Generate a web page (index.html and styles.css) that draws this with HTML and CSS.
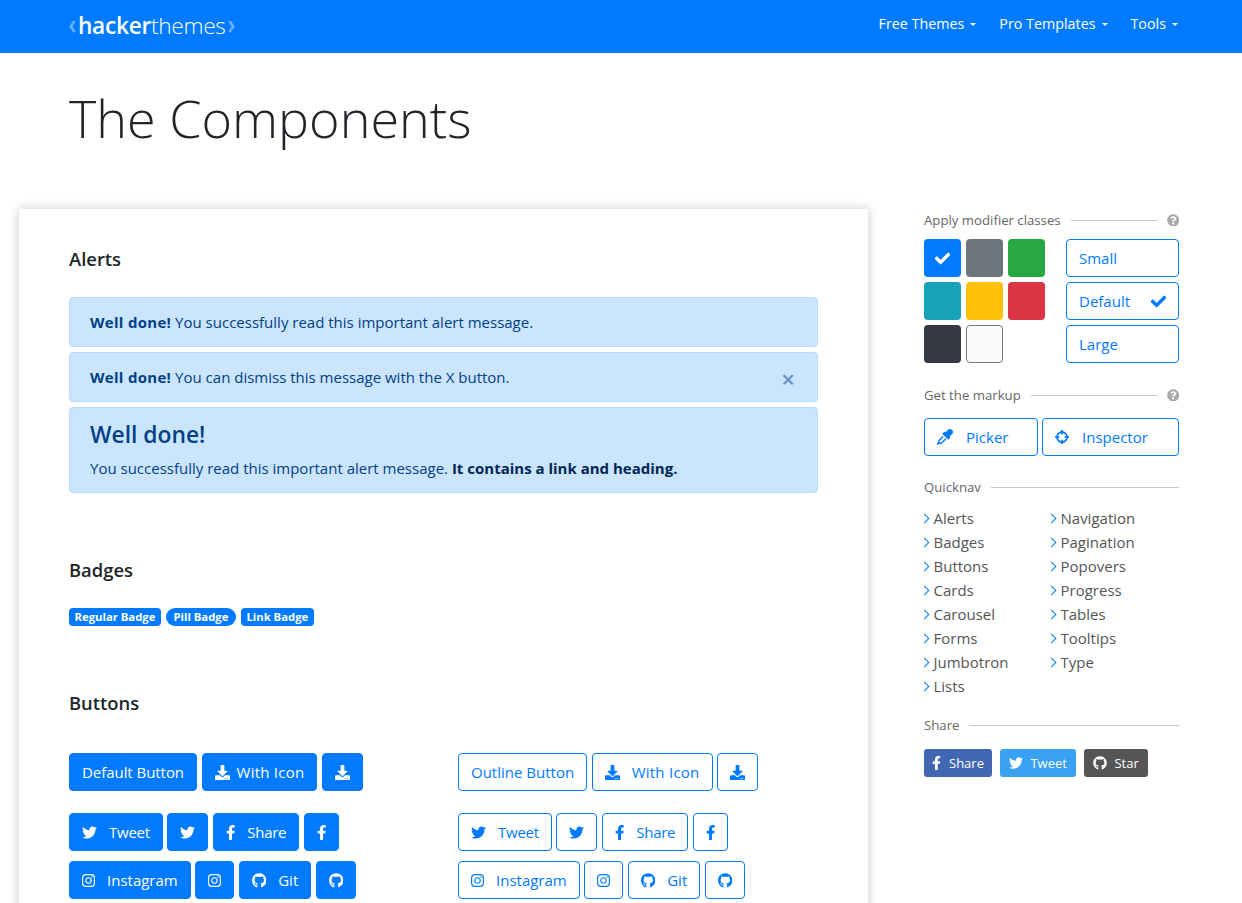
FILE: index.html
```html
<!DOCTYPE html>
<html lang="en">
<head>
  <meta charset="UTF-8" />
  <meta name="viewport" content="width=device-width, initial-scale=1.0" />
  <title>The Components - HackerThemes</title>
  <link rel="stylesheet" href="styles.css">
</head>
<body>

  <svg class="sprites" xmlns="http://www.w3.org/2000/svg">
    <symbol id="i-check" viewBox="0 0 512 512"><path d="M173.898 439.404l-166.4-166.4c-9.997-9.997-9.997-26.206 0-36.204l36.203-36.204c9.997-9.998 26.207-9.998 36.204 0L192 312.69 432.095 72.596c9.997-9.997 26.207-9.997 36.204 0l36.203 36.204c9.997 9.997 9.997 26.206 0 36.204l-294.4 294.401c-9.998 9.997-26.207 9.997-36.204-.001z"/></symbol>
    <symbol id="i-help" viewBox="0 0 512 512"><path d="M504 256c0 136.997-111.043 248-248 248S8 392.997 8 256C8 119.083 119.043 8 256 8s248 111.083 248 248zM262.655 90c-54.497 0-89.255 22.957-116.549 63.758-3.536 5.286-2.353 12.415 2.715 16.258l34.699 26.31c5.205 3.947 12.621 3.008 16.665-2.122 17.864-22.658 30.113-35.797 57.303-35.797 20.429 0 45.698 13.148 45.698 32.958 0 14.976-12.363 22.667-32.534 33.976C247.128 238.528 216 254.941 216 296v4c0 6.627 5.373 12 12 12h56c6.627 0 12-5.373 12-12v-1.333c0-28.462 83.186-29.647 83.186-106.667 0-58.002-60.165-102-116.531-102zM256 338c-25.365 0-46 20.635-46 46 0 25.364 20.635 46 46 46s46-20.636 46-46c0-25.365-20.635-46-46-46z"/></symbol>
    <symbol id="i-dropper" viewBox="0 0 512 512">
      <path d="M483.88 28.12c-37.47-37.5-98.28-37.5-135.75 0l-77.09 77.09-13.1-13.1c-9.44-9.44-24.65-9.31-33.94 0l-40.97 40.97c-9.37 9.37-9.37 24.57 0 33.94l161.94 161.94c9.44 9.44 24.65 9.31 33.94 0L419.88 288c9.37-9.37 9.37-24.57 0-33.94l-13.1-13.1 77.09-77.09c37.51-37.48 37.51-98.26.01-135.75z"/>
      <path d="M198 238L66 370c-8 8-12 18-12 28v32L24 482l54-28h48c10 0 20-4 28-12l132-132" fill="none" stroke="currentColor" stroke-width="44"/>
    </symbol>
    <symbol id="i-crosshairs" viewBox="0 0 512 512"><path d="M500 224h-30.364C455.724 130.325 381.675 56.276 288 42.364V12c0-6.627-5.373-12-12-12h-40c-6.627 0-12 5.373-12 12v30.364C130.325 56.276 56.276 130.325 42.364 224H12c-6.627 0-12 5.373-12 12v40c0 6.627 5.373 12 12 12h30.364C56.276 381.675 130.325 455.724 224 469.636V500c0 6.627 5.373 12 12 12h40c6.627 0 12-5.373 12-12v-30.364C381.675 455.724 455.724 381.675 469.636 288H500c6.627 0 12-5.373 12-12v-40c0-6.627-5.373-12-12-12zM288 404.634V364c0-6.627-5.373-12-12-12h-40c-6.627 0-12 5.373-12 12v40.634C165.826 392.232 119.783 346.243 107.366 288H148c6.627 0 12-5.373 12-12v-40c0-6.627-5.373-12-12-12h-40.634C119.768 165.826 165.757 119.783 224 107.366V148c0 6.627 5.373 12 12 12h40c6.627 0 12-5.373 12-12v-40.634C346.174 119.768 392.217 165.757 404.634 224H364c-6.627 0-12 5.373-12 12v40c0 6.627 5.373 12 12 12h40.634C392.232 346.174 346.243 392.217 288 404.634z"/></symbol>
    <symbol id="i-download" viewBox="0 0 512 512"><path d="M216 0h80c13.3 0 24 10.7 24 24v168h87.7c17.8 0 26.7 21.5 14.1 34.1L269.7 378.3c-7.5 7.5-19.8 7.5-27.3 0L90.1 226.1c-12.6-12.6-3.7-34.1 14.1-34.1H192V24c0-13.3 10.7-24 24-24zm296 376v112c0 13.3-10.7 24-24 24H24c-13.3 0-24-10.7-24-24V376c0-13.3 10.7-24 24-24h146.7l49 49c20.1 20.1 52.5 20.1 72.6 0l49-49H488c13.3 0 24 10.7 24 24zm-124 88c0-11-9-20-20-20s-20 9-20 20 9 20 20 20 20-9 20-20zm64 0c0-11-9-20-20-20s-20 9-20 20 9 20 20 20 20-9 20-20z"/></symbol>
    <symbol id="i-twitter" viewBox="0 0 512 512"><path d="M459.37 151.716c.325 4.548.325 9.097.325 13.645 0 138.72-105.583 298.558-298.558 298.558-59.452 0-114.68-17.219-161.137-47.106 8.447.974 16.568 1.299 25.34 1.299 49.055 0 94.213-16.568 130.274-44.832-46.132-.975-84.792-31.188-98.112-72.772 6.498.974 12.995 1.624 19.818 1.624 9.421 0 18.843-1.3 27.614-3.573-48.081-9.747-84.143-51.98-84.143-102.985v-1.299c13.969 7.797 30.214 12.67 47.431 13.319-28.264-18.843-46.781-51.005-46.781-87.391 0-19.492 5.197-37.36 14.294-52.954 51.655 63.675 129.3 105.258 216.365 109.807-1.624-7.797-2.599-15.918-2.599-24.04 0-57.828 46.782-104.934 104.934-104.934 30.213 0 57.502 12.67 76.67 33.137 23.715-4.548 46.456-13.32 66.599-25.34-7.798 24.366-24.366 44.833-46.132 57.827 21.117-2.273 41.584-8.122 60.426-16.243-14.292 20.791-32.161 39.308-52.628 54.253z"/></symbol>
    <symbol id="i-facebook" viewBox="0 0 320 512"><path d="M279.14 288l14.22-92.66h-88.91v-60.13c0-25.35 12.42-50.06 52.24-50.06h40.42V6.26S260.43 0 225.36 0c-73.22 0-121.08 44.38-121.08 124.72v70.62H22.89V288h81.39v224h100.17V288z"/></symbol>
    <symbol id="i-instagram" viewBox="0 0 448 512"><path d="M224.1 141c-63.6 0-114.9 51.3-114.9 114.9s51.3 114.9 114.9 114.9S339 319.5 339 255.9 287.7 141 224.1 141zm0 189.6c-41.1 0-74.7-33.5-74.7-74.7s33.5-74.7 74.7-74.7 74.7 33.5 74.7 74.7-33.6 74.7-74.7 74.7zm146.4-194.3c0 14.9-12 26.8-26.8 26.8-14.9 0-26.8-12-26.8-26.8s12-26.8 26.8-26.8 26.8 12 26.8 26.8zm76.1 27.2c-1.7-35.9-9.9-67.7-36.2-93.9-26.2-26.2-58-34.4-93.9-36.2-37-2.1-147.9-2.1-184.9 0-35.8 1.7-67.6 9.9-93.9 36.1s-34.4 58-36.2 93.9c-2.1 37-2.1 147.9 0 184.9 1.7 35.9 9.9 67.7 36.2 93.9s58 34.4 93.9 36.2c37 2.1 147.9 2.1 184.9 0 35.9-1.7 67.7-9.9 93.9-36.2 26.2-26.2 34.4-58 36.2-93.9 2.1-37 2.1-147.8 0-184.8zM398.8 388c-7.8 19.6-22.9 34.7-42.6 42.6-29.5 11.7-99.5 9-132.1 9s-102.7 2.6-132.1-9c-19.6-7.8-34.7-22.9-42.6-42.6-11.7-29.5-9-99.5-9-132.1s-2.6-102.7 9-132.1c7.8-19.6 22.9-34.7 42.6-42.6 29.5-11.7 99.5-9 132.1-9s102.7-2.6 132.1 9c19.6 7.8 34.7 22.9 42.6 42.6 11.7 29.5 9 99.5 9 132.1s2.7 102.7-9 132.1z"/></symbol>
    <symbol id="i-github" viewBox="0 0 496 512"><path d="M165.9 397.4c0 2-2.3 3.6-5.2 3.6-3.3 0-5.6-1.6-5.6-3.6 0-2 2.3-3.6 5.2-3.6 3-.3 5.6 1.3 5.6 3.6zm-31.1-4.5c-.7 2 1.3 4.3 4.3 4.9 2.6 1 5.6 0 6.2-2s-1.3-4.3-4.3-5.2c-2.6-.7-5.5.3-6.2 2.3zm44.2-1.7c-2.9.7-4.9 2.6-4.6 4.9.3 2 2.9 3.3 5.9 2.6 2.9-.7 4.9-2.6 4.6-4.6-.3-1.9-3-3.2-5.9-2.9zM244.8 8C106.1 8 0 113.3 0 252c0 110.9 69.8 205.8 169.5 239.2 12.8 2.3 17.3-5.6 17.3-12.1 0-6.2-.3-40.4-.3-61.4 0 0-70 15-84.7-29.8 0 0-11.4-29.1-27.8-36.6 0 0-22.9-15.7 1.6-15.4 0 0 24.9 2 38.6 25.8 21.9 38.6 58.6 27.5 72.9 20.9 2.3-16 8.8-27.1 16-33.7-55.9-6.2-112.3-14.3-112.3-110.5 0-27.5 7.6-41.3 23.6-58.9-2.6-6.5-11.1-33.3 2.6-67.9 20.9-6.5 69 27 69 27 20-5.6 41.5-8.5 62.8-8.5s42.8 2.9 62.8 8.5c0 0 48.1-33.6 69-27 13.7 34.7 5.2 61.4 2.6 67.9 16 17.7 25.8 31.5 25.8 58.9 0 96.5-58.9 104.2-114.8 110.5 9.2 7.9 17 22.9 17 46.4 0 33.7-.3 75.4-.3 83.6 0 6.5 4.6 14.4 17.3 12.1C428.2 457.8 496 362.9 496 252 496 113.3 383.5 8 244.8 8z"/></symbol>
  </svg>

  <header class="navbar">
    <a class="logo" href="#">
      <svg class="logo-mark" viewBox="0 0 7 13"><polyline points="5.6,1 1.8,6.5 5.6,12"/></svg>
      <span class="logo-text"><b>hacker</b>themes</span>
      <svg class="logo-mark" viewBox="0 0 7 13"><polyline points="1.4,1 5.2,6.5 1.4,12"/></svg>
    </a>
    <nav class="nav-links">
      <a class="nav-link" href="#">Free Themes</a>
      <a class="nav-link" href="#">Pro Templates</a>
      <a class="nav-link" href="#">Tools</a>
    </nav>
  </header>

  <h1 class="page-title">The Components</h1>

  <div class="layout">
    <main class="card">
      <section class="section section-alerts">
        <h2 class="section-title">Alerts</h2>
        <div class="alert"><strong>Well done!</strong> You successfully read this important alert message.</div>
        <div class="alert alert-dismiss"><span><strong>Well done!</strong> You can dismiss this message with the X button.</span><span class="alert-close">&times;</span></div>
        <div class="alert alert-big">
          <h3 class="alert-heading">Well done!</h3>
          <p>You successfully read this important alert message. <a href="#">It contains a link and heading.</a></p>
        </div>
      </section>

      <section class="section section-badges">
        <h2 class="section-title">Badges</h2>
        <div class="badges">
          <span class="badge">Regular Badge</span>
          <span class="badge badge-pill">Pill Badge</span>
          <a class="badge" href="#">Link Badge</a>
        </div>
      </section>

      <section class="section section-buttons">
        <h2 class="section-title">Buttons</h2>
        <div class="btn-grid">
          <div class="btn-col">
            <div class="btn-row btn-row-first">
              <a class="btn btn-plain" href="#">Default Button</a>
              <a class="btn btn-with" href="#"><svg class="icon"><use href="#i-download"/></svg>With Icon</a>
              <a class="btn btn-square" href="#"><svg class="icon"><use href="#i-download"/></svg></a>
            </div>
            <div class="btn-row">
              <a class="btn btn-social btn-tight" href="#"><svg class="icon"><use href="#i-twitter"/></svg>Tweet</a>
              <a class="btn btn-square" href="#"><svg class="icon"><use href="#i-twitter"/></svg></a>
              <a class="btn btn-social btn-tight" href="#"><svg class="icon icon-fb"><use href="#i-facebook"/></svg>Share</a>
              <a class="btn btn-square" href="#"><svg class="icon icon-fb"><use href="#i-facebook"/></svg></a>
            </div>
            <div class="btn-row">
              <a class="btn btn-social" href="#"><svg class="icon icon-ig"><use href="#i-instagram"/></svg>Instagram</a>
              <a class="btn btn-square" href="#"><svg class="icon icon-ig"><use href="#i-instagram"/></svg></a>
              <a class="btn btn-social" href="#"><svg class="icon icon-gh"><use href="#i-github"/></svg>Git</a>
              <a class="btn btn-square" href="#"><svg class="icon icon-gh"><use href="#i-github"/></svg></a>
            </div>
          </div>
          <div class="btn-col btn-col-outline">
            <div class="btn-row btn-row-first">
              <a class="btn" href="#">Outline Button</a>
              <a class="btn btn-social btn-with" href="#"><svg class="icon"><use href="#i-download"/></svg>With Icon</a>
              <a class="btn btn-square" href="#"><svg class="icon"><use href="#i-download"/></svg></a>
            </div>
            <div class="btn-row">
              <a class="btn btn-social btn-tight" href="#"><svg class="icon"><use href="#i-twitter"/></svg>Tweet</a>
              <a class="btn btn-square" href="#"><svg class="icon"><use href="#i-twitter"/></svg></a>
              <a class="btn btn-social btn-tight" href="#"><svg class="icon icon-fb"><use href="#i-facebook"/></svg>Share</a>
              <a class="btn btn-square" href="#"><svg class="icon icon-fb"><use href="#i-facebook"/></svg></a>
            </div>
            <div class="btn-row">
              <a class="btn btn-social" href="#"><svg class="icon icon-ig"><use href="#i-instagram"/></svg>Instagram</a>
              <a class="btn btn-square" href="#"><svg class="icon icon-ig"><use href="#i-instagram"/></svg></a>
              <a class="btn btn-social" href="#"><svg class="icon icon-gh"><use href="#i-github"/></svg>Git</a>
              <a class="btn btn-square" href="#"><svg class="icon icon-gh"><use href="#i-github"/></svg></a>
            </div>
          </div>
        </div>
      </section>
    </main>

    <aside class="sidebar">
      <div class="side-label"><span>Apply modifier classes</span><i class="side-rule"></i><svg class="side-help"><use href="#i-help"/></svg></div>
      <div class="modifiers">
        <div class="swatches">
          <span class="swatch swatch-primary"><svg class="swatch-check"><use href="#i-check"/></svg></span>
          <span class="swatch swatch-secondary"></span>
          <span class="swatch swatch-success"></span>
          <span class="swatch swatch-info"></span>
          <span class="swatch swatch-warning"></span>
          <span class="swatch swatch-danger"></span>
          <span class="swatch swatch-dark"></span>
          <span class="swatch swatch-light"></span>
        </div>
        <div class="sizes">
          <a class="size-btn" href="#">Small</a>
          <a class="size-btn" href="#">Default<svg class="size-check"><use href="#i-check"/></svg></a>
          <a class="size-btn" href="#">Large</a>
        </div>
      </div>

      <div class="side-label side-label-markup"><span>Get the markup</span><i class="side-rule"></i><svg class="side-help"><use href="#i-help"/></svg></div>
      <div class="markup-tools">
        <a class="tool-btn tool-picker" href="#"><svg class="icon"><use href="#i-dropper"/></svg>Picker</a>
        <a class="tool-btn tool-inspector" href="#"><svg class="icon"><use href="#i-crosshairs"/></svg>Inspector</a>
      </div>

      <div class="side-label side-label-quicknav"><span>Quicknav</span><i class="side-rule"></i></div>
      <div class="quicknav">
        <ul>
          <li><a href="#">Alerts</a></li>
          <li><a href="#">Badges</a></li>
          <li><a href="#">Buttons</a></li>
          <li><a href="#">Cards</a></li>
          <li><a href="#">Carousel</a></li>
          <li><a href="#">Forms</a></li>
          <li><a href="#">Jumbotron</a></li>
          <li><a href="#">Lists</a></li>
        </ul>
        <ul>
          <li><a href="#">Navigation</a></li>
          <li><a href="#">Pagination</a></li>
          <li><a href="#">Popovers</a></li>
          <li><a href="#">Progress</a></li>
          <li><a href="#">Tables</a></li>
          <li><a href="#">Tooltips</a></li>
          <li><a href="#">Type</a></li>
        </ul>
      </div>

      <div class="side-label side-label-share"><span>Share</span><i class="side-rule"></i></div>
      <div class="share">
        <a class="share-btn share-fb" href="#"><svg class="share-icon"><use href="#i-facebook"/></svg>Share</a>
        <a class="share-btn share-tw" href="#"><svg class="share-icon"><use href="#i-twitter"/></svg>Tweet</a>
        <a class="share-btn share-gh" href="#"><svg class="share-icon"><use href="#i-github"/></svg>Star</a>
      </div>
    </aside>
  </div>

</body>
</html>
```

FILE: styles.css
```css
html, body {
  height: 100%;
  overflow: hidden;
}

body {
  margin: 0;
  font-family: "Open Sans", "Noto Sans", sans-serif;
  font-size: 15px;
  line-height: 24px;
  color: #212529;
  background-color: #fff;
}

a {
  text-decoration: none;
}

.sprites {
  display: none;
}

/* navbar */
.navbar {
  height: 53px;
  background-color: #007bff;
  display: flex;
  align-items: center;
  justify-content: space-between;
  padding: 0 64px 0 69px;
}

.logo {
  display: flex;
  align-items: center;
  gap: 2px;
  color: #fff;
  padding-bottom: 1px;
}

.logo-mark {
  width: 7px;
  height: 13px;
  fill: none;
  stroke: #66b0ff;
  stroke-width: 2.6;
}

.logo-text {
  font-size: 22.7px;
  font-weight: 300;
  line-height: 30px;
  letter-spacing: -0.3px;
}

.logo-text b {
  font-weight: 600;
}

.nav-links {
  display: flex;
  gap: 23px;
  padding-bottom: 6px;
}

.nav-link {
  color: #fff;
  font-size: 14.3px;
  display: flex;
  align-items: center;
}

.nav-link::after {
  content: "";
  margin: 2px 0 0 6px;
  border-top: 3px solid #fff;
  border-left: 3px solid transparent;
  border-right: 3px solid transparent;
}

/* title */
.page-title {
  margin: 26px 0 0 69px;
  height: 130px;
  font-size: 52.1px;
  font-weight: 300;
  line-height: 78px;
  color: #212529;
}

/* layout */
.layout {
  display: flex;
  align-items: flex-start;
  padding-left: 19px;
}

.card {
  width: 849px;
  flex: none;
  box-sizing: border-box;
  padding: 36px 50px 50px;
  background-color: #fff;
  box-shadow: 0 0 10px rgba(0, 0, 0, .22);
}

.section-title {
  margin: 0;
  font-size: 18.4px;
  font-weight: 600;
  line-height: 28px;
}

/* alerts */
.section-alerts .section-title {
  margin-bottom: 24px;
}

.alert {
  box-sizing: border-box;
  min-height: 50px;
  margin-bottom: 5px;
  padding: 12px 20px;
  background-color: #cce5ff;
  border: 1px solid #b8daff;
  border-radius: 4px;
  color: #004085;
}

.alert strong {
  font-weight: 700;
  letter-spacing: .3px;
}

.alert-dismiss {
  height: 50px;
  display: flex;
  justify-content: space-between;
}

.alert-close {
  font-size: 24px;
  font-weight: 600;
  margin-right: 2px;
  color: #004085;
  opacity: .5;
  line-height: 28px;
}

.alert-big {
  height: 86px;
  padding-top: 9px;
}

.alert-heading {
  margin: 0 0 3px;
  font-size: 22.8px;
  font-weight: 600;
  line-height: 36px;
}

.alert-big p {
  margin: 0;
}

.alert-big a {
  font-weight: 700;
  color: #002752;
}

/* badges */
.section-badges {
  margin-top: 63px;
}

.section-badges .section-title {
  margin-bottom: 24px;
}

.badges {
  display: flex;
  gap: 5px;
}

.badge {
  height: 18px;
  padding: 0 5.5px;
  display: flex;
  align-items: center;
  background-color: #007bff;
  color: #fff;
  font-size: 11.3px;
  font-weight: 700;
  border-radius: 4px;
}

.badge-pill {
  padding: 0 7.5px;
  border-radius: 10px;
}

/* buttons */
.section-buttons {
  margin-top: 63px;
}

.section-buttons .section-title {
  margin-bottom: 36px;
}

.btn-grid {
  display: grid;
  grid-template-columns: 389px 1fr;
}

.btn-row {
  display: flex;
  gap: 4.5px;
  margin-bottom: 10px;
}

.btn-row-first {
  margin-bottom: 22px;
}

.btn {
  box-sizing: border-box;
  height: 38px;
  padding: 0 12px;
  display: flex;
  align-items: center;
  background-color: #007bff;
  border: 1px solid #007bff;
  border-radius: 4px;
  color: #fff;
}

.btn .icon {
  width: 15px;
  height: 15px;
  margin-right: 7px;
  fill: currentColor;
}

.btn-social .icon {
  margin-right: 12px;
}

.btn-square .icon {
  margin-right: 0;
}

.btn-plain {
  letter-spacing: -.05px;
}

.btn-with {
  letter-spacing: .25px;
}

.btn-tight {
  letter-spacing: -.25px;
}

.btn .icon-fb {
  width: 9.4px;
}

.btn .icon-ig {
  width: 13px;
}

.btn .icon-gh {
  width: 14.5px;
}

.btn-col-outline .btn {
  background-color: #fff;
  color: #007bff;
}

/* sidebar */
.sidebar {
  width: 255px;
  flex: none;
  margin-left: 56px;
  color: #6c757d;
}

.side-label {
  height: 22px;
  display: flex;
  align-items: center;
  font-size: 13.2px;
  color: #666;
}

.side-rule {
  flex: 1;
  height: 1px;
  margin: 0 10px;
  background-color: #c8c8c8;
}

.side-label-quicknav .side-rule,
.side-label-share .side-rule {
  margin-right: 0;
}

.side-help {
  width: 12.5px;
  height: 12.5px;
  fill: #aaa;
}

.modifiers {
  display: flex;
  justify-content: space-between;
  margin-top: 8px;
}

.swatches {
  display: grid;
  grid-template-columns: repeat(3, 37px);
  grid-auto-rows: 38px;
  gap: 5px;
}

.swatch {
  box-sizing: border-box;
  border-radius: 4px;
  display: flex;
  align-items: center;
  justify-content: center;
}

.swatch-primary { background-color: #007bff; }
.swatch-secondary { background-color: #6c757d; }
.swatch-success { background-color: #28a745; }
.swatch-info { background-color: #17a2b8; }
.swatch-warning { background-color: #ffc107; }
.swatch-danger { background-color: #dc3545; }
.swatch-dark { background-color: #343a40; }
.swatch-light { background-color: #f8f9fa; border: 1px solid #777; }

.swatch-check {
  width: 15px;
  height: 15px;
  fill: #fff;
  stroke: #fff;
  stroke-width: 24;
}

.sizes {
  width: 113px;
  display: flex;
  flex-direction: column;
  gap: 5px;
}

.size-btn {
  box-sizing: border-box;
  height: 38px;
  padding: 0 12px;
  display: flex;
  align-items: center;
  justify-content: space-between;
  border: 1px solid #007bff;
  border-radius: 4px;
  color: #007bff;
}

.size-check {
  width: 15px;
  height: 15px;
  fill: #007bff;
  stroke: #007bff;
  stroke-width: 24;
}

.side-label-markup {
  margin-top: 21px;
}

.markup-tools {
  display: flex;
  gap: 4px;
  margin-top: 12px;
}

.tool-btn {
  box-sizing: border-box;
  height: 38px;
  padding: 0 12px;
  display: flex;
  align-items: center;
  border: 1px solid #007bff;
  border-radius: 4px;
  color: #007bff;
}

.tool-btn .icon {
  width: 16px;
  height: 16px;
  margin-right: 13px;
  fill: currentColor;
}

.tool-inspector .icon {
  width: 14px;
  height: 14px;
}

.tool-picker {
  width: 114px;
}

.tool-inspector {
  width: 137px;
}

.side-label-quicknav {
  margin-top: 20px;
}

.quicknav {
  display: grid;
  grid-template-columns: 127px 1fr;
  margin-top: 8px;
}

.quicknav ul {
  margin: 0;
  padding: 0;
  list-style: none;
}

.quicknav li {
  height: 24px;
  display: flex;
  align-items: center;
}

.quicknav li::before {
  content: "";
  box-sizing: border-box;
  width: 7px;
  height: 7px;
  margin: 0 6px 0 -3.5px;
  border-top: 1.3px solid #007bff;
  border-right: 1.3px solid #007bff;
  transform: rotate(45deg);
}

.quicknav a {
  color: #555;
}

.side-label-share {
  margin-top: 16px;
}

.share {
  display: flex;
  gap: 8.5px;
  margin-top: 13px;
}

.share-btn {
  height: 28px;
  padding: 0 9px;
  display: flex;
  align-items: center;
  border-radius: 3px;
  color: #fff;
  font-size: 13px;
}

.share-icon {
  width: 14px;
  height: 14px;
  margin-right: 7px;
  fill: currentColor;
}

.share-fb {
  padding: 0 8px;
}

.share-fb .share-icon {
  width: 9px;
  margin-right: 8px;
}

.share-fb { background-color: #4267b2; }
.share-tw { background-color: #38a1f3; }
.share-gh { background-color: #555; }
```
